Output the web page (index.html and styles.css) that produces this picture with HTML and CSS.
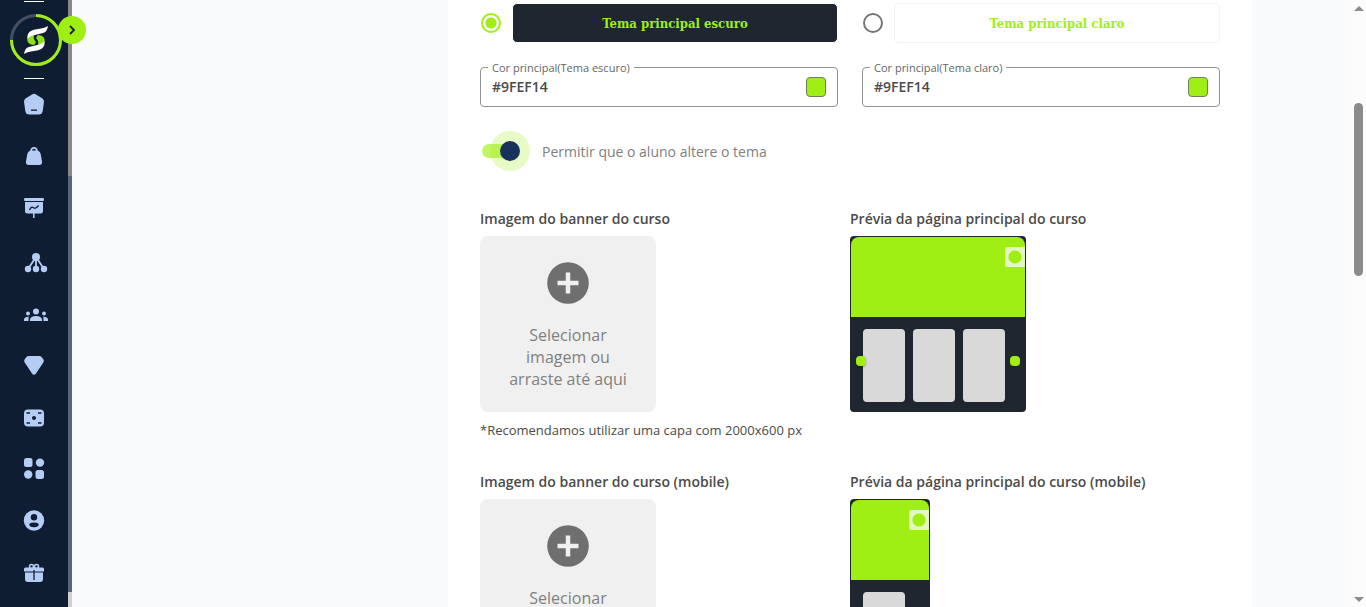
FILE: index.html
```html
<!DOCTYPE html>
<html lang="pt-BR">
<head>
<meta charset="utf-8">
<title>Tema do curso</title>
<link rel="stylesheet" href="styles.css">
</head>
<body>
<div class="app">
  <aside class="sidebar">
    <nav class="menu" aria-label="Menu principal">
      <span class="rule"></span>
      <a class="brand" href="#" aria-label="Início">
        <svg width="52" height="52" viewBox="0 0 52 52" fill="none">
          <circle cx="26" cy="26" r="24.5" stroke="#454f60" stroke-width="3"/>
          <path d="M26 1.500A24.500 24.500 0 1 1 1.500 26" stroke="#9fef14" stroke-width="3"/>
          <g id="half">
            <path d="M17.300 25.500C17.800 22.800 20 21.600 24 21.300c-.6 2.700 0 4.700 2 6.700l-1.800 3c-4.500-.3-7-2.500-6.900-5.500z" fill="#8fe01c"/>
            <path d="M38 12c-.8 4-2 6.200-5 7l-9 2.200c-3.500.8-5.500 2-6.500 4-.8-5.500 2-8.700 7.500-9.700l6-1c3-.5 5.200-1.300 7-2.500z" fill="#fff"/>
          </g>
          <use href="#half" transform="rotate(180 26 26)"/>
        </svg>
      </a>
      <span class="rule"></span>
      <ul class="links">
        <li><a href="#" aria-label="Início"><svg viewBox="0 0 24 24"><path d="M10 1.500q2-1.300 4 0l6.500 4q2 1.500 1.400 4L20.700 18q-.6 3.500-4 3.500H7.300q-3.400 0-4-3.500L2.100 9.500q-.6-2.500 1.400-4z"/><path class="cut" d="M9 16.500h6v1.300H9z"/></svg></a></li>
        <li><a href="#" aria-label="Produtos"><svg viewBox="0 0 24 24"><path d="M8.300 5.500Q8.500 2 12 2t3.700 3.500Q18 6 18.700 9l1.300 7.500q.5 3.500-3 3.500H7q-3.500 0-3-3.500L5.300 9q.7-3 3-3.500z"/><path class="cut" d="M10 5.500Q10.200 3.800 12 3.800t2 1.700z"/></svg></a></li>
        <li><a href="#" aria-label="Cursos"><svg viewBox="0 0 24 24"><path d="M3 1h18q1 0 1 1.500T21 4H3Q2 4 2 2.500T3 1zM3 5h18v9q0 2.500-2.500 2.500h-6V21h-1.500v-4.500h-5.500Q3 16.500 3 14z"/><path class="line" d="M7.500 13q2-4 4-2.300t5-2.200"/></svg></a></li>
        <li class="shift"><a href="#" aria-label="Afiliados"><svg viewBox="0 0 24 24"><circle cx="12" cy="6" r="4"/><circle cx="4" cy="18" r="3.200"/><circle cx="12" cy="18" r="3.200"/><circle cx="20" cy="18" r="3.200"/><path d="M12 6v12M12 6L4 18M12 6l8 12" stroke="#b5cdf5" stroke-width="1.800"/></svg></a></li>
        <li class="shift"><a href="#" aria-label="Alunos"><svg viewBox="0 0 24 24"><circle cx="12" cy="8.500" r="3"/><circle cx="4" cy="10.500" r="2"/><circle cx="20" cy="10.500" r="2"/><path d="M6 18v-1.500Q6.500 13 12 13t6 3.500V18zM0 18v-1.600Q.5 13.600 4.800 13.800 4.400 15 4.500 18zM24 18v-1.600Q23.500 13.600 19.200 13.800 19.600 15 19.500 18z"/></svg></a></li>
        <li><a href="#" aria-label="Premium"><svg viewBox="0 0 24 24"><path d="M7 3h10q1.800 0 2.800 1.300l1.500 2q1.200 1.700 0 3.300L14 20.500q-2 2.400-4 0L2.700 9.600q-1.200-1.600 0-3.300l1.500-2Q5.200 3 7 3z"/></svg></a></li>
        <li><a href="#" aria-label="Financeiro"><svg viewBox="0 0 24 24"><rect x="2" y="4.500" width="20" height="17" rx="4"/><circle class="cut" cx="12" cy="13" r="2"/><path class="line" d="M4.500 8h3.500M16 8h3.500M4.500 18h3.500M16 18h3.500"/></svg></a></li>
        <li><a href="#" aria-label="Aplicativos"><svg viewBox="0 0 24 24"><rect x="2" y="1" width="8.500" height="9" rx="2.500"/><circle cx="18" cy="5.600" r="4.200"/><circle cx="6.200" cy="17.500" r="4.200"/><rect x="13.500" y="13" width="8.500" height="9" rx="2.500"/></svg></a></li>
        <li><a href="#" aria-label="Perfil"><svg viewBox="0 0 24 24"><circle cx="12" cy="11.500" r="10.200"/><circle class="cut" cx="12" cy="8.300" r="3.200"/><ellipse class="cut" cx="12" cy="15.800" rx="4.700" ry="2.400"/></svg></a></li>
        <li><a href="#" aria-label="Presentes"><svg viewBox="0 0 24 24"><path d="M3.500 6.500h17Q22 6.500 22 8v2.500H2V8q0-1.500 1.500-1.500zM3 11.500h18V18q0 3-3 3H6q-3 0-3-3z"/><circle cx="9.500" cy="5.500" r="2" fill="none" stroke="#b5cdf5" stroke-width="1.500"/><circle cx="14.500" cy="5.500" r="2" fill="none" stroke="#b5cdf5" stroke-width="1.500"/><path class="line" d="M12 9v10"/></svg></a></li>
      </ul>
    </nav>
    <div class="side-scroll"><span class="side-thumb"></span><span class="side-track"></span><span class="side-end"></span></div>
    <button class="expand" type="button" aria-label="Expandir menu"><svg width="8" height="10" viewBox="0 0 8 10"><path d="M2 1l4 4-4 4" fill="none" stroke="#12203a" stroke-width="1.800"/></svg></button>
  </aside>

  <main class="main">
    <form class="panel">
      <div class="themes">
        <div class="theme">
          <input class="radio" type="radio" name="theme" id="dark" checked>
          <label class="theme-box dark" for="dark">Tema principal escuro</label>
        </div>
        <div class="theme">
          <input class="radio" type="radio" name="theme" id="light">
          <label class="theme-box light" for="light">Tema principal claro</label>
        </div>
        <div class="field">
          <label class="field-label" for="dark-color">Cor principal(Tema escuro)</label>
          <input class="field-input" id="dark-color" type="text" value="#9FEF14">
          <button class="swatch" type="button" aria-label="Escolher cor do tema escuro"></button>
        </div>
        <div class="field">
          <label class="field-label" for="light-color">Cor principal(Tema claro)</label>
          <input class="field-input" id="light-color" type="text" value="#9FEF14">
          <button class="swatch" type="button" aria-label="Escolher cor do tema claro"></button>
        </div>
      </div>

      <div class="allow">
        <input class="switch" type="checkbox" role="switch" id="allow" checked>
        <label for="allow">Permitir que o aluno altere o tema</label>
      </div>

      <section class="banner">
        <div class="col">
          <h2>Imagem do banner do curso</h2>
          <button class="drop" type="button">
            <svg width="42" height="42" viewBox="0 0 42 42"><circle cx="21" cy="21" r="20.800" fill="#6f6f6f"/><path d="M21 10.500v21M10.500 21h21" stroke="#f0f0f0" stroke-width="4.500"/></svg>
            <span>Selecionar imagem ou arraste até aqui</span>
          </button>
          <p class="hint">*Recomendamos utilizar uma capa com 2000x600 px</p>
        </div>
        <div class="col">
          <h2>Prévia da página principal do curso</h2>
          <div class="preview">
            <div class="hero"><span class="badge"></span></div>
            <div class="cards"><i></i><i></i><i></i><span class="dot prev"></span><span class="dot next"></span></div>
          </div>
        </div>
      </section>

      <section class="banner">
        <div class="col">
          <h2>Imagem do banner do curso (mobile)</h2>
          <button class="drop" type="button">
            <svg width="42" height="42" viewBox="0 0 42 42"><circle cx="21" cy="21" r="20.800" fill="#6f6f6f"/><path d="M21 10.500v21M10.500 21h21" stroke="#f0f0f0" stroke-width="4.500"/></svg>
            <span>Selecionar imagem ou arraste até aqui</span>
          </button>
        </div>
        <div class="col">
          <h2>Prévia da página principal do curso (mobile)</h2>
          <div class="preview mobile">
            <div class="hero"><span class="badge"></span></div>
            <div class="cards"><i></i></div>
          </div>
        </div>
      </section>
    </form>
  </main>

  <div class="scrollbar"><span class="arrow up"></span><span class="thumb"></span><span class="arrow down"></span></div>
</div>
</body>
</html>
```
FILE: styles.css
```css
* { box-sizing: border-box; }
body { margin: 0; font-family: "Open Sans", sans-serif; font-size: 14px; color: #4a4a4a; background: #f9fafc; }
button, input { font: inherit; margin: 0; padding: 0; }
h2, p, ul { margin: 0; padding: 0; }
.app { display: flex; height: 100vh; overflow: hidden; }

.sidebar { position: relative; display: flex; flex: none; width: 72px; background: #0f1d33; }
.menu { flex: 1; display: flex; flex-direction: column; align-items: center; }
.rule { flex: none; width: 20px; height: 1px; background: #fff; margin-top: 1px; }
.brand { display: block; height: 52px; margin: 12px 0 11px 4px; }
.brand svg { display: block; }
.links { list-style: none; }
.links li { display: flex; align-items: center; height: 52px; }
.links svg { display: block; width: 24px; height: 24px; fill: #b5cdf5; }
.links .shift { padding: 4px 0 0 2px; margin-right: -2px; }
.links .cut { fill: #0f1d33; }
.links .line { fill: none; stroke: #0f1d33; stroke-width: 1.3; }
.side-scroll { display: flex; flex-direction: column; width: 4px; }
.side-thumb { height: 29%; background: #8a8886; }
.side-track { flex: 1; background: #56657c; }
.side-end { height: 15px; background: #d0d0d0; }
.expand { position: absolute; left: 58px; top: 16px; width: 28px; height: 28px; border: 0; border-radius: 50%; background: #9fef14; display: grid; place-items: center; }

.main { flex: 1; display: grid; grid-template-columns: 376fr 804fr 99fr; }
.panel { grid-column: 2; display: flex; flex-direction: column; background: #fff; padding: 3px 32px 0; }
.themes { display: grid; grid-template-columns: 1fr 1fr; gap: 24px; }
.theme { display: flex; align-items: center; gap: 11px; }
.radio { appearance: none; flex: none; width: 20px; height: 20px; margin-left: 1px; border: 2px solid #757575; border-radius: 50%; }
.radio:checked { border-color: #9fef14; background: radial-gradient(circle, #9fef14 5px, transparent 6px); }
.theme-box { flex: 1; height: 40px; display: grid; place-items: center; border: 1px solid #fff; border-radius: 5px; font-family: "DejaVu Serif Condensed", "DejaVu Serif", serif; font-weight: 700; font-size: 13px; color: #9fef14; }
.dark { background: #20262f; }
.light { border-color: #f3f3f3; }
.field { position: relative; display: flex; align-items: center; height: 40px; border: 1px solid #8f9396; border-radius: 4px; padding: 0 11px; }
.field-label { position: absolute; left: 7px; top: -8px; padding: 0 4px; background: #fff; font-size: 11px; line-height: 16px; color: #666; }
.field-input { flex: 1; min-width: 0; border: 0; background: none; color: #4a4a4a; font-weight: 600; line-height: 20px; outline: 0; }
.swatch { width: 20px; height: 20px; border: 1px solid #70805a; border-radius: 4px; background: #9fef14; }

.allow { display: flex; align-items: center; gap: 24px; height: 40px; margin: 24px 0 36px 2px; color: #808080; }
.switch { appearance: none; position: relative; width: 36px; height: 14px; border-radius: 7px; background: #c0f567; }
.switch::after { content: ""; position: absolute; right: -2px; top: -3px; width: 20px; height: 20px; border-radius: 50%; background: #17335c; box-shadow: 0 0 0 10px rgba(159, 239, 20, .24); }

.banner { display: grid; grid-template-columns: 1fr 1fr; min-height: 263px; }
h2 { font-size: 14px; line-height: 24px; font-weight: 600; margin-bottom: 5px; }
.drop { display: flex; flex-direction: column; align-items: center; gap: 20px; width: 176px; height: 176px; padding: 26px 24px 0; border: 0; border-radius: 8px; background: #f0f0f0; color: #808080; font-size: 16px; line-height: 22px; }
.drop svg { flex: none; }
.hint { margin-top: 8px; font-size: 13px; line-height: 20px; }
.preview { width: 176px; height: 176px; padding: 1px; border-radius: 4px; background: #20262f; }
.mobile { width: 80px; }
.hero { position: relative; height: 80px; border-radius: 8px 8px 0 0; background: #9fef14; }
.badge { position: absolute; right: 0; top: 10px; width: 20px; height: 20px; border-radius: 2px 0 0 2px; background: radial-gradient(circle, #9fef14 6px, #e3f7c0 7px); }
.cards { position: relative; display: flex; gap: 8px; padding: 12px; }
.cards i { width: 42px; height: 73px; border-radius: 4px; background: #d9d9d9; }
.dot { position: absolute; top: 39px; width: 10px; height: 10px; border-radius: 4px; background: #9fef14; }
.prev { left: 5px; box-shadow: 0 1px 2px rgba(0, 0, 0, .3); }
.next { right: 5px; }

.scrollbar { flex: none; display: flex; flex-direction: column; align-items: center; width: 15px; background: #fcfcfc; padding: 6px 0 5px; }
.arrow { border: 5px solid transparent; }
.up { border-top: 0; border-bottom-color: #8b8b8b; }
.down { border-bottom: 0; border-top-color: #8b8b8b; margin-top: auto; }
.thumb { width: 9px; height: 29%; margin-top: 92px; border-radius: 5px; background: #8b8b8b; }
```
